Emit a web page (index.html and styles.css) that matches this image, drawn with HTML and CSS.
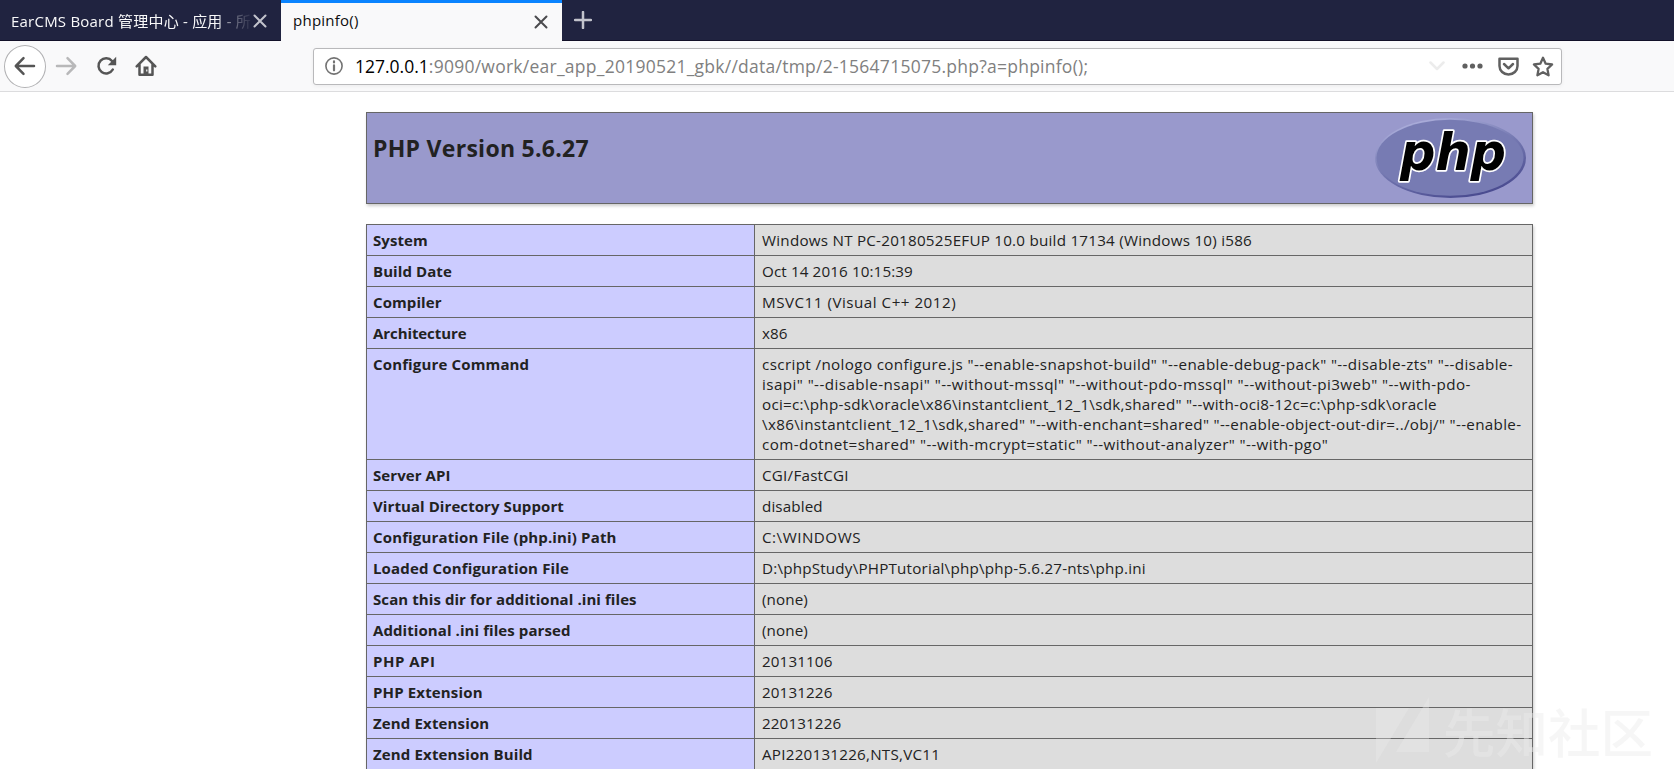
FILE: index.html
```html
<!DOCTYPE html>
<html lang="zh-CN">
<head>
<meta charset="utf-8">
<title>phpinfo()</title>
<link rel="stylesheet" href="styles.css">
</head>
<body>
<header class="tabs">
  <div class="tab">
    <span class="tab-title faded">EarCMS Board 管理中心 - 应用 - 所</span>
    <svg class="close" width="14" height="14" viewBox="0 0 14 14"><path d="M1.500 1.500l11 11M12.500 1.500l-11 11"/></svg>
  </div>
  <div class="tab active">
    <span class="tab-title">phpinfo()</span>
    <svg class="close" width="14" height="14" viewBox="0 0 14 14"><path d="M1.500 1.500l11 11M12.500 1.500l-11 11"/></svg>
  </div>
  <svg class="plus" width="18" height="18" viewBox="0 0 18 18"><path d="M9 1v16M1 9h16"/></svg>
</header>
<nav class="toolbar">
  <span class="back"><svg width="22" height="20" viewBox="0 0 22 20"><path d="M20 10H2M9.500 2.200L1.800 10l7.700 7.800"/></svg></span>
  <svg class="icon forward" width="22" height="20" viewBox="0 0 22 20"><path d="M2 10h18M12.500 2.200l7.700 7.800-7.700 7.800"/></svg>
  <svg class="icon reload" width="22" height="20" viewBox="0 0 22 20"><path d="M16.800 13.500A7.600 7.600 0 1 1 16 5"/><path class="fill" d="M20.200 .8v8.400h-8.400z"/></svg>
  <svg class="icon home" width="22" height="22" viewBox="0 0 22 22"><path d="M1.700 11.300L11 2l9.300 9.300M4.500 9.500v10.300h13V9.500"/><path class="fill" d="M8.500 11.500h5V20h-5z"/><path class="knob" d="M11.200 14.500h1.200v2h-1.200z"/></svg>
  <div class="urlbar">
    <svg class="info" width="20" height="20" viewBox="0 0 20 20"><circle cx="10" cy="10" r="8.100"/><path class="i" d="M10 9.300v5M10 5.400v1"/></svg>
    <span class="url"><b>127.0.0.1</b>:9090/work/ear_app_20190521_gbk//data/tmp/2-1564715075.php?a=phpinfo();</span>
    <svg class="drop" width="16" height="10" viewBox="0 0 16 10"><path d="M1.500 1.500L8 8l6.500-6.500"/></svg>
    <svg class="dots" width="21" height="6" viewBox="0 0 21 6"><circle cx="3" cy="3" r="2.600"/><circle cx="10.500" cy="3" r="2.600"/><circle cx="18" cy="3" r="2.600"/></svg>
    <svg class="pocket" width="21" height="19" viewBox="0 0 21 19"><path d="M1.500 1.700h18v7.300a9 8.500 0 0 1-18 0zM6 7l4.500 4.300L15 7"/></svg>
    <svg class="star" width="22" height="21" viewBox="0 0 22 21"><path d="M11 1.800l2.700 5.900 6.400.8-4.700 4.400 1.200 6.400L11 16.200l-5.600 3.100 1.200-6.400L1.900 8.500l6.400-.8z"/></svg>
  </div>
</nav>
<main class="page">
  <section class="banner">
    <h1>PHP Version 5.6.27</h1>
    <svg class="logo" width="152" height="82" viewBox="0 0 152 82">
      <defs><linearGradient id="rim" x1="0.250" y1="0" x2="0.750" y2="1"><stop offset="0" stop-color="#b0b2de"/><stop offset=".45" stop-color="#777bb3"/><stop offset="1" stop-color="#45468c"/></linearGradient></defs>
      <ellipse cx="75.500" cy="41" rx="75.500" ry="40" fill="url(#rim)"/>
      <ellipse cx="75" cy="40.800" rx="73.500" ry="38" fill="#777bb3"/>
      <text x="25" y="53" textLength="106" lengthAdjust="spacingAndGlyphs">php</text>
    </svg>
  </section>
  <table class="info-table">
    <tr><th>System</th><td>Windows NT PC-20180525EFUP 10.0 build 17134 (Windows 10) i586</td></tr>
    <tr><th>Build Date</th><td class="tight">Oct 14 2016 10:15:39</td></tr>
    <tr><th>Compiler</th><td class="wide">MSVC11 (Visual C++ 2012)</td></tr>
    <tr><th class="narrow">Architecture</th><td class="tight">x86</td></tr>
    <tr><th class="loose">Configure Command</th><td class="command"><span class="l1">cscript /nologo configure.js "--enable-snapshot-build" "--enable-debug-pack" "--disable-zts" "--disable-</span><span class="l2">isapi" "--disable-nsapi" "--without-mssql" "--without-pdo-mssql" "--without-pi3web" "--with-pdo-</span><span class="l3">oci=c:\php-sdk\oracle\x86\instantclient_12_1\sdk,shared" "--with-oci8-12c=c:\php-sdk\oracle</span><span class="l4">\x86\instantclient_12_1\sdk,shared" "--with-enchant=shared" "--enable-object-out-dir=../obj/" "--enable-</span><span class="l5">com-dotnet=shared" "--with-mcrypt=static" "--without-analyzer" "--with-pgo"</span></td></tr>
    <tr><th>Server API</th><td>CGI/FastCGI</td></tr>
    <tr><th>Virtual Directory Support</th><td class="tight">disabled</td></tr>
    <tr><th class="loose">Configuration File (php.ini) Path</th><td class="wide">C:\WINDOWS</td></tr>
    <tr><th class="loose">Loaded Configuration File</th><td class="path">D:\phpStudy\PHPTutorial\php\php-5.6.27-nts\php.ini</td></tr>
    <tr><th>Scan this dir for additional .ini files</th><td class="tight">(none)</td></tr>
    <tr><th>Additional .ini files parsed</th><td class="tight">(none)</td></tr>
    <tr><th class="wide">PHP API</th><td class="tight">20131106</td></tr>
    <tr><th class="loose">PHP Extension</th><td class="tight">20131226</td></tr>
    <tr><th class="loose">Zend Extension</th><td class="tight">220131226</td></tr>
    <tr><th class="loose">Zend Extension Build</th><td>API220131226,NTS,VC11</td></tr>
  </table>
</main>
<div class="watermark">
  <svg width="54" height="68" viewBox="0 0 54 68"><path d="M0 12h33L0 67zM53 1v55H20z"/></svg>
  <span>先知社区</span>
</div>
</body>
</html>
```
FILE: styles.css
```css
* { box-sizing: border-box; }
body {
  margin: 0;
  height: 769px;
  overflow: hidden;
  background: #fff;
  color: #222;
  font-family: "Open Sans", "Noto Sans", "Noto Sans CJK SC", sans-serif;
}
svg { display: block; flex: none; fill: none; stroke: #555; stroke-width: 2.5; stroke-linecap: round; stroke-linejoin: round; }

.tabs { display: flex; height: 41px; background: #202340; border-bottom: 1px solid #121028; }
.tab { display: flex; align-items: center; width: 281px; height: 41px; padding: 0 14px 0 11px; color: #f9f9fa; font-size: 15px; }
.tab-title { flex: 1; line-height: 40px; white-space: nowrap; }
.faded { letter-spacing: .22px; -webkit-mask-image: linear-gradient(to right, #000 205px, rgba(0, 0, 0, .4) 222px, transparent 243px); mask-image: linear-gradient(to right, #000 205px, rgba(0, 0, 0, .4) 222px, transparent 243px); }
.faded + .close { margin-left: -12px; }
.tab.active { padding-left: 12px; background: #f9f9fa; border-top: 3px solid #0a84ff; color: #0c0c0d; }
.active .tab-title { line-height: 33px; height: 36px; letter-spacing: .25px; }
.close { stroke: #c2c3cc; stroke-width: 2; }
.active .close { stroke: #4a4a4d; }
.plus { margin: 11px 0 0 12px; stroke: #c2c3cc; stroke-width: 2.500; }

.toolbar { display: flex; align-items: center; height: 51px; padding-left: 4px; background: #f9f9fa; border-bottom: 1px solid #dcdcde; }
.back { display: flex; align-items: center; justify-content: center; width: 42px; height: 43px; border: 1px solid #b1b1b3; border-radius: 50%; background: #fff; }
.forward { margin-left: 9px; stroke: #b8b8b9; }
.reload { margin-left: 19px; }
.home { margin-left: 17px; }
.fill { fill: #555; stroke: none; }
.knob { fill: #fff; stroke: none; }
.urlbar { display: flex; align-items: center; width: 1249px; height: 37px; margin-left: 156px; padding: 0 7px 0 10px; background: #fff; border: 1px solid #b9b9bb; border-radius: 3px; box-shadow: 0 1px 4px rgba(0, 0, 0, .06); }
.info { stroke: #737373; stroke-width: 1.600; }
.i { stroke-width: 2.200; }
.url { flex: 1; margin-left: 11px; color: #808080; font-size: 17.500px; letter-spacing: .25px; white-space: nowrap; }
.url b { color: #000; font-weight: 400; letter-spacing: 0; }
.drop { margin-right: 17px; stroke: #ececec; }
.dots { margin-right: 15px; fill: #606060; stroke: none; }
.pocket { margin-right: 13px; stroke: #606060; }
.star { stroke: #606060; stroke-width: 2.300; }

.page { width: 1167px; margin: 20px 0 0 366px; }
.banner { display: flex; justify-content: space-between; height: 92px; padding: 4px 5px 0 6px; background: #99c; border: 1px solid #666; box-shadow: 1px 2px 3px #ccc; }
.banner h1 { margin: 14px 0 0; font-size: 23px; line-height: 34px; letter-spacing: .28px; }
.logo ellipse { stroke: none; }
.logo text { font: italic bold 52px "DejaVu Sans", sans-serif; fill: #000; stroke: #fff; stroke-width: 3.500; paint-order: stroke; }
.info-table { width: 1167px; margin-top: 20px; border-collapse: collapse; table-layout: fixed; box-shadow: 1px 2px 3px #ccc; font-size: 15.200px; line-height: 20px; }
.info-table th, .info-table td { padding: 5px 6px; border: 1px solid #666; text-align: left; vertical-align: top; }
.info-table th { width: 388px; background: #ccf; font-size: 15px; font-weight: 700; letter-spacing: .08px; }
.info-table th.narrow { letter-spacing: -.08px; }
.info-table th.loose { letter-spacing: .15px; }
.info-table th.wide { letter-spacing: .5px; }
.info-table td { padding-left: 7px; background: #ddd; letter-spacing: .24px; }
.info-table td.path { letter-spacing: .2px; }
.info-table td.tight { letter-spacing: .12px; }
.info-table td.wide { letter-spacing: .5px; }
.command span { display: block; white-space: nowrap; }
.l1 { letter-spacing: .37px; }
.l2 { letter-spacing: .43px; }
.l3 { letter-spacing: .28px; }
.l4 { letter-spacing: .32px; }
.l5 { letter-spacing: .41px; }

.watermark { position: absolute; left: 1376px; top: 696px; display: flex; align-items: center; gap: 13px; color: rgba(235, 235, 235, .45); font: 500 52.500px/68px "Noto Sans CJK SC", sans-serif; white-space: nowrap; }
.watermark svg { fill: rgba(235, 235, 235, .35); stroke: none; }
```
